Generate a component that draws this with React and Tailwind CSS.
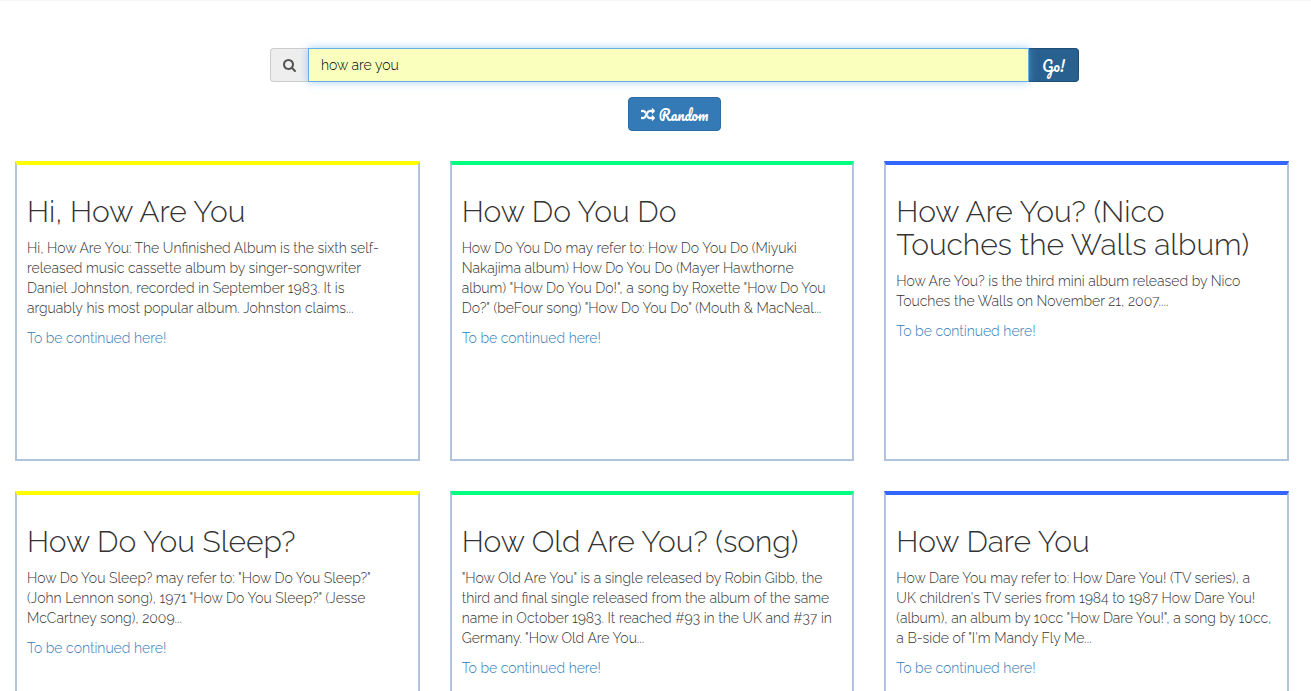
const results = [
  {
    title: 'Hi, How Are You',
    accent: 'border-t-[#ffff00]',
    text: 'Hi, How Are You: The Unfinished Album is the sixth self-released music cassette album by singer-songwriter Daniel\u00a0Johnston, recorded in September 1983. It is arguably\u00a0his most popular album. Johnston claims...',
  },
  {
    title: 'How Do You Do',
    accent: 'border-t-[#00ff80]',
    text: 'How Do You Do may refer to: How Do You Do (Miyuki Nakajima album) How Do You Do (Mayer Hawthorne album)\u00a0"How Do You Do!", a song by Roxette "How Do You Do?"\u00a0(beFour song) "How Do You Do" (Mouth & MacNeal...',
  },
  {
    title: 'How Are You? (Nico Touches the Walls album)',
    accent: 'border-t-[#3366ff]',
    text: 'How Are You? is the third mini album released by Nico Touches the Walls on November 21, 2007....',
  },
  {
    title: 'How Do You Sleep?',
    accent: 'border-t-[#ffff00]',
    text: 'How Do You Sleep? may refer to: "How Do You Sleep?" (John Lennon song), 1971 "How Do You Sleep?" (Jesse McCartney song), 2009...',
  },
  {
    title: 'How Old Are You? (song)',
    accent: 'border-t-[#00ff80]',
    text: '"How Old Are You" is a single released by Robin Gibb, the third and final single released from the album of the same name in October 1983. It reached #93 in the UK and #37 in Germany. "How Old Are You...',
  },
  {
    title: 'How Dare You',
    accent: 'border-t-[#3366ff]',
    text: 'How Dare You may refer to: How Dare You! (TV series), a UK\u00a0children\'s TV series from 1984 to 1987 How Dare You! (album), an album by 10cc "How Dare You!", a song by 10cc, a B-side of "I\'m Mandy Fly Me...',
  },
];

function SearchIcon() {
  return (
    <svg viewBox="64 0 1664 1792" className="h-3.5 w-[13px]" fill="currentColor" aria-hidden="true">
      <path d="M1216 832q0-185-131.5-316.5t-316.5-131.5-316.5 131.5-131.5 316.5 131.5 316.5 316.5 131.5 316.5-131.5 131.5-316.5zm512 832q0 52-38 90t-90 38q-54 0-90-38l-343-342q-179 124-399 124-143 0-273.5-55.5t-225-150-150-225-55.5-273.5 55.5-273.5 150-225 225-150 273.5-55.5 273.5 55.5 225 150 150 225 55.5 273.5q0 220-124 399l343 343q37 37 37 90z" />
    </svg>
  );
}

function ShuffleIcon() {
  return (
    <svg viewBox="0 0 1792 1792" className="size-3.5" fill="currentColor" stroke="currentColor" strokeWidth="40" aria-hidden="true">
      <path d="M666 481q-60 92-137 273-22-45-37-72.5t-40.5-63.5-51-56.5-63-35-81.5-14.500h-224q-14 0-23-9t-9-23v-192q0-14 9-23t23-9h224q250 0 410 225zm1126 799q0 14-9 23l-320 320q-9 9-23 9-13 0-22.500-9.500t-9.500-22.500v-192q-32 0-85 .5t-81 1-73-1-71-5-64-10.500-63-18.500-58-28.500-59-40-55-53.500-56-69.500q59-93 136-273 22 45 37 72.500t40.500 63.500 51 56.500 63 35 81.500 14.500h256v-192q0-14 9-23t23-9q12 0 24 10l319 319q9 9 9 23zm0-896q0 14-9 23l-320 320q-9 9-23 9-13 0-22.500-9.500t-9.500-22.500v-192h-256q-48 0-87 15t-69 45-51 61.500-45 77.500q-32 62-78 171-29 66-49.500 111t-54 105-64 100-74 83-90 68.500-106.500 42-128 16.500h-224q-14 0-23-9t-9-23v-192q0-14 9-23t23-9h224q48 0 87-15t69-45 51-61.500 45-77.500q32-62 78-171 29-66 49.500-111t54-105 64-100 74-83 90-68.500 106.500-42 128-16.500h256v-192q0-14 9-23t23-9q12 0 24 10l319 319q9 9 9 23z" />
    </svg>
  );
}

function ResultCard({ title, accent, text }) {
  return (
    <article className={'min-h-[300px] border-2 border-t-4 border-[#b0c4de] px-2.5 pt-[30px] pb-2.5 ' + accent}>
      <h2 className="text-[30px] leading-[33px]">{title}</h2>
      <p className="mt-2.5 text-sm leading-5">{text}</p>
      <a href="#" className="mt-2.5 inline-block text-sm leading-5 text-[#337ab7]">
        To be continued here!
      </a>
    </article>
  );
}

export default function App() {
  return (
    <main className="border-t border-[#f5f5f5] bg-white pt-[47px] pr-[22px] pb-[30px] pl-[15px] font-['Raleway','Open_Sans',sans-serif] font-light text-[#333]">
      <form className="mr-[210px] ml-[255px] flex flex-col items-center gap-[15px]">
        <div className="flex h-[34px] w-full">
          <label
            htmlFor="query"
            aria-label="Search"
            className="flex w-[38px] items-center rounded-l border border-r-0 border-[#ccc] bg-[#eee] pl-3 text-[#555]"
          >
            <SearchIcon />
          </label>
          <input
            id="query"
            type="text"
            defaultValue="how are you"
            className="relative min-w-0 flex-1 border border-[#66afe9] bg-[#faffbd] px-3 text-sm text-black shadow-[0_0_8px_rgba(102,175,233,0.6)] outline-none"
          />
          <button
            type="submit"
            className="w-[50px] rounded-r border border-l-0 border-[#204d74] bg-[#286090] pt-0.5 font-['Pacifico','Lato',cursive] text-sm font-normal text-white"
          >
            Go!
          </button>
        </div>
        <button
          type="button"
          className="flex h-[34px] items-center justify-center gap-1 rounded border border-[#2e6da4] bg-[#337ab7] px-3 pt-0.5 font-['Pacifico','Lato',cursive] text-sm font-normal text-white"
        >
          <ShuffleIcon />
          Random
        </button>
      </form>
      <section className="mt-[30px] grid grid-cols-3 gap-[30px]">
        {results.map((result) => (
          <ResultCard key={result.title} {...result} />
        ))}
      </section>
    </main>
  );
}
